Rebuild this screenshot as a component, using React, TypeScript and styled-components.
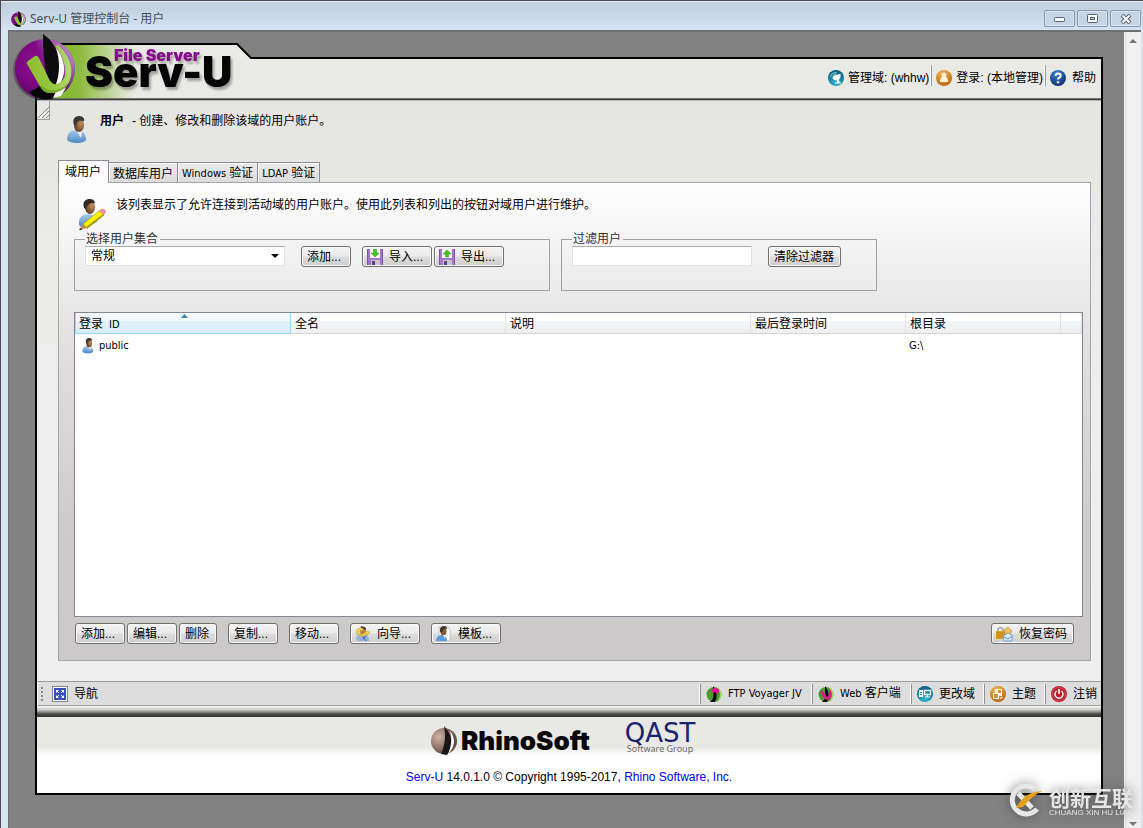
import React from "react";
import styled, { createGlobalStyle, css } from "styled-components";

const CJK = '"Noto Sans CJK SC", sans-serif';

const GlobalStyle = createGlobalStyle`
  * { box-sizing: border-box; }
  body { margin: 0; background: #828282; }
  body, button, input, select {
    font-family: "Liberation Sans", ${CJK};
    font-size: 12px;
    line-height: 16px;
    color: #000;
  }
`;

/* ---------- window ---------- */

const Window = styled.div`
  display: flex;
  flex-direction: column;
  min-height: 100vh;
  border-top: 1px solid #4a4a50;
  border-left: 1px solid #4a4a50;
  background: #d7e4f2;
`;

const TitleBar = styled.header`
  display: flex;
  align-items: center;
  height: 29px;
  padding: 6px 2px 0 10px;
  background: linear-gradient(#f4f8fc 0, #c0cddb 2px, #d5e2f1 100%);
`;

const TitleText = styled.h1`
  flex: 1;
  margin: 0 0 0 4px;
  font-family: "Noto Sans", ${CJK};
  font-size: 12px;
  font-weight: 400;
  line-height: 16px;
  color: #454f5b;
`;

const Controls = styled.div`
  display: flex;
  gap: 2px;
`;

const ControlButton = styled.button`
  display: flex;
  align-items: center;
  justify-content: center;
  width: 31px;
  height: 17px;
  padding: 0;
  border: 1px solid #8797b0;
  border-radius: 2px;
  background: #c6d4e4;
  box-shadow: inset 0 0 0 1px #dbe5f1;
`;

const Client = styled.div`
  display: flex;
  flex: 1;
  margin: 0 2px 0 7px;
  border-top: 2px solid #6e7072;
  border-left: 1px solid #6e7072;
`;

const Desk = styled.div`
  flex: 1;
  min-width: 0;
  padding: 25px 21px 32px 26px;
  background: #828282;
`;

const ScrollTrack = styled.div`
  display: flex;
  flex-direction: column;
  justify-content: space-between;
  align-items: center;
  width: 17px;
  padding: 7px 0 1px;
  background: linear-gradient(90deg, #fafafa 0, #e4e4e4 1px, #f0f0f0 4px, #f0f0f0 100%);
`;

const Panel = styled.div`
  position: relative;
  border: 2px solid #000;
  background: #e9eae5;
`;

/* ---------- header ---------- */

const Brand = styled.svg`
  position: absolute;
  top: -26px;
  left: -28px;
`;

const Wordmark = styled.g`
  font-family: Inter, sans-serif;
  font-weight: 900;
  filter: drop-shadow(2px 3px 1px rgba(0, 0, 0, 0.3));
`;

const Banner = styled.div`
  display: flex;
  justify-content: flex-end;
  height: 42px;
  padding: 6px 5px 0 0;
  background: linear-gradient(#e9eae5 39px, #74746f 39px, #74746f 40px, #3c3c3a 40px, #3c3c3a 41px, #b4b4b0 41px);
`;

const TopLink = styled.a<{ $last?: boolean }>`
  display: flex;
  align-items: center;
  gap: 4px;
  height: 21px;
  margin-left: 4px;
  padding: 4px 2px 0 0;
  color: #000;
  text-decoration: none;

  ${(p) => p.$last
    ? css`
        gap: 6px;
        padding-right: 0;
      `
    : css`
        border-right: 1px solid #9a9a9a;
        box-shadow: inset -1px 0 #fff;
      `}
`;

/* ---------- page body ---------- */

const Body = styled.main`
  padding: 0 10px 20px 0;
  background: linear-gradient(#e5e5e3 0, #e6e6e3 60px, #ebebe9 150px, #eee 300px);
`;

const PageTitle = styled.div`
  display: flex;
  align-items: flex-start;
  height: 59px;
`;

const SizeGrip = styled.svg`
  margin-right: 17px;
`;

const PageIcon = styled.div`
  margin-top: 15px;
  width: 33px;
`;

const PageText = styled.h2`
  margin: 12px 0 0;
  font-size: 12px;
  font-weight: 400;
  line-height: 16px;

  b { margin-right: 8px; }
`;

const Tabs = styled.div`
  position: relative;
  display: flex;
  align-items: flex-end;
  height: 23px;
  margin: 0 0 -1px 21px;
`;

const Tab = styled.button<{ $active?: boolean }>`
  height: 20px;
  margin-bottom: 1px;
  padding: 2px 4px 0;
  border: 1px solid #8c8c98;
  border-left-width: 0;
  border-bottom: 0;
  background: linear-gradient(#eaeaea, #dcdcdc);
  box-shadow: inset 1px 1px 0 #f8f8f8;
  white-space: nowrap;

  ${(p) => p.$active && css`
    height: 23px;
    margin-bottom: 0;
    padding: 0 7px 0 6px;
    border-left-width: 1px;
    background: #fdfdfd;
  `}
`;

const Latin = styled.span`
  font-family: "DejaVu Sans Condensed", Roboto, ${CJK};
  font-size: 11px;
`;

const TabPanel = styled.section`
  margin-left: 21px;
  padding: 14px 7px 16px 15px;
  border: 1px solid #a4a4a8;
  background: linear-gradient(#fefefe 0, #f1f0f1 80px, #e2e0e1 160px, #cdcbcc 340px, #cbc9ca 100%);
`;

const Intro = styled.div`
  display: flex;
  align-items: flex-start;
  gap: 9px;
  height: 35px;
  padding-left: 3px;

  svg { margin-top: 2px; }
  p { margin: 0; }
`;

const Groups = styled.div`
  display: flex;
  gap: 11px;
`;

const Group = styled.fieldset<{ $width: number }>`
  width: ${(p) => p.$width}px;
  height: 59px;
  margin: 0;
  padding: 0 10px;
  border: 1px solid #a0a0a0;

  legend {
    padding: 0 2px 0 1px;
    line-height: 14px;
    color: #333;
  }
`;

const Line = styled.div<{ $gap?: number }>`
  display: flex;
  gap: ${(p) => p.$gap ?? 2}px;
`;

const SelectBox = styled.div`
  position: relative;
  width: 200px;

  svg { position: absolute; top: 8px; right: 6px; pointer-events: none; }
`;

const fieldStyle = css`
  height: 20px;
  padding: 0 5px;
  border: 1px solid #e2e3ea;
  border-top-color: #abadb3;
  border-radius: 0;
  background: #fff;
`;

const Select = styled.select`
  ${fieldStyle}
  width: 100%;
  appearance: none;
`;

const Input = styled.input`
  ${fieldStyle}
  width: 180px;
`;

const PushButton = styled.button<{ $icon?: boolean; $width?: number }>`
  display: flex;
  align-items: center;
  gap: 6px;
  width: ${(p) => (p.$width ? `${p.$width}px` : "auto")};
  height: 21px;
  padding: ${(p) => (p.$icon ? "1px 6px 0 4px" : "1px 6px 0 5px")};
  border: 1px solid #707070;
  border-radius: 3px;
  background: linear-gradient(#f3f3f3 0, #ebebeb 48%, #dcdcdc 52%, #cfcfcf 100%);
  box-shadow: inset 0 0 0 1px #f8f8f8;
  white-space: nowrap;
`;

const GridFrame = styled.div`
  min-height: 305px;
  margin-top: 21px;
  border: 1px solid #828790;
  background: #fff;
`;

const Grid = styled.table`
  width: 100%;
  border-collapse: separate;
  border-spacing: 0;
  table-layout: fixed;

  td {
    height: 22px;
    padding: 1px 4px 0 3px;
    font-family: "DejaVu Sans Condensed", Roboto, ${CJK};
    font-size: 11px;
  }
`;

const HeadCell = styled.th<{ $sorted?: boolean }>`
  position: relative;
  height: 21px;
  padding: 2px 4px 0;
  border-right: 1px solid #e0e2e5;
  border-bottom: 1px solid #d5d5d5;
  background: linear-gradient(#fff 40%, #f4f5f6 42%, #eeeff1);
  font-weight: 400;
  text-align: left;

  ${(p) => p.$sorted && css`
    padding-left: 3px;
    border: 1px solid #96d9f9;
    border-top: 0;
    background: linear-gradient(#f2f9fc 40%, #e1f1f9 42%, #d8ecf6);
  `}

  svg { position: absolute; top: 1px; left: 105px; }
`;

const UserCell = styled.span`
  display: flex;
  align-items: center;
  gap: 5px;
  padding-left: 4px;
`;

const Actions = styled.div`
  display: flex;
  justify-content: space-between;
  margin: 6px 9px 0 1px;
`;

/* ---------- navigation and footer ---------- */

const NavBar = styled.nav`
  display: flex;
  align-items: center;
  height: 25px;
  padding: 0 4px 0 2px;
  border-top: 1px solid #9a9a9a;
  border-bottom: 1px solid #9a9a9a;
  border-left: 1px solid #fff;
  background: #ddd;
`;

const NavLink = styled.a<{ $width: number }>`
  display: flex;
  align-items: center;
  gap: 6px;
  width: ${(p) => p.$width}px;
  color: #000;
  text-decoration: none;
  white-space: nowrap;
`;

const NavHome = styled(NavLink)`
  flex: 1;
  margin-left: 9px;
`;

const Divider = styled.i`
  width: 2px;
  height: 20px;
  margin-right: 5px;
  border-left: 1px solid #fff;
  border-right: 1px solid #8e8e8e;
`;

const Ridge = styled.div`
  height: 11px;
  background: linear-gradient(#fff 0, #deded9 2px, #c8c8c2 4px, #8a8a86 6px, #4a4a48 8px, #333 11px);
`;

const Footer = styled.footer`
  display: flex;
  flex-direction: column;
  align-items: center;
  padding-bottom: 8px;
  background: linear-gradient(#e8e9e4 30px, #fff 39px);

  p { margin: 9px 0 0; }
  a { color: #00e; text-decoration: none; }
`;

const Logos = styled.div`
  display: flex;
  align-items: flex-start;
  gap: 12px;
  height: 43px;
  padding: 6px 0 0 6px;

  svg { overflow: visible; }
`;

const Watermark = styled.div`
  position: fixed;
  right: 10px;
  bottom: 10px;
  display: flex;
  align-items: center;
  gap: 7px;
  color: #e6e6e6;
  filter: drop-shadow(0 0 6px rgba(60, 60, 60, 0.7));
  pointer-events: none;

  strong { display: block; font: 700 21px/24px ${CJK}; white-space: nowrap; }
  small { display: block; font: 8px/8px "Liberation Sans", sans-serif; white-space: nowrap; }
`;

/* ---------- drawings ---------- */

const Defs = styled.svg`
  position: absolute;
`;

const Gradients = () => (
  <Defs width="0" height="0" aria-hidden="true">
    <defs>
      <radialGradient id="purple" cx=".4" cy=".4" r=".62">
        <stop offset="0" stopColor="#8e0f94" />
        <stop offset=".6" stopColor="#7a0880" />
        <stop offset="1" stopColor="#560a5c" />
      </radialGradient>
      <linearGradient id="gloss" x1=".4" y1=".6" x2="1" y2=".2">
        <stop offset=".3" stopColor="#d9a8e4" stopOpacity="0" />
        <stop offset="1" stopColor="#d9a8e4" stopOpacity=".9" />
      </linearGradient>
      <linearGradient id="leaf" x1="0" x2="1">
        <stop offset="0" stopColor="#8fbd31" />
        <stop offset=".6" stopColor="#97c840" />
        <stop offset="1" stopColor="#b4da78" />
      </linearGradient>
      <linearGradient id="greenFade" x1="0" x2="1">
        <stop offset="0" stopColor="#83b62d" />
        <stop offset=".35" stopColor="#8cbb3c" />
        <stop offset="1" stopColor="#e9eae5" />
      </linearGradient>
      <radialGradient id="skin" cx=".7" cy=".4" r=".7">
        <stop offset="0" stopColor="#c58f5f" />
        <stop offset="1" stopColor="#5e3a20" />
      </radialGradient>
      <linearGradient id="shirt" x1="0" y1="0" x2="0" y2="1">
        <stop offset="0" stopColor="#a9cbee" />
        <stop offset="1" stopColor="#4f88c4" />
      </linearGradient>
      <radialGradient id="teal" cx=".5" cy=".8" r=".8">
        <stop offset="0" stopColor="#35b6cf" />
        <stop offset="1" stopColor="#075a7d" />
      </radialGradient>
      <radialGradient id="amber" cx=".4" cy=".25" r=".8">
        <stop offset="0" stopColor="#f5b755" />
        <stop offset="1" stopColor="#b7620f" />
      </radialGradient>
      <radialGradient id="navy" cx=".4" cy=".2" r=".9">
        <stop offset="0" stopColor="#2c86cf" />
        <stop offset="1" stopColor="#14246c" />
      </radialGradient>
      <radialGradient id="rhino" cx=".3" cy=".35" r=".8">
        <stop offset="0" stopColor="#d3b3a6" />
        <stop offset="1" stopColor="#4d3b36" />
      </radialGradient>
    </defs>
  </Defs>
);

const Emblem = () => (
  <g>
    <circle cx="45" cy="69" r="30" fill="url(#purple)" />
    <circle cx="45" cy="69" r="30" fill="url(#gloss)" />
    <path d="M29 92 C34 90 39 87 42 84 L56 90 L54 98 C44 101 35 98 29 92Z" fill="#060606" />
    <path d="M43 34 C52 40 57 49 59 58 C60 68 59 78 56 86 L49 82 C44 68 43 52 43 34Z" fill="#0c0c0c" />
    <path d="M56 48 C62 55 65 66 64 72 C63 79 61 83 58 85 L56 84 C60 73 60 60 56 48Z" fill="#fff" />
    <path d="M56 91 L66 88 L61 96 L53 98Z" fill="#f4f4f4" />
    <path d="M27 64 Q26 62 28 61 L35 56 Q37 55 39 58 L49 79 Q52 85 57 84 C64 81 66 77 65 68 C64 59 60 52 55 46 L58 45 C64 50 68 57 70 63 C73 73 71 82 65 88 C60 92 55 93 51 93 C46 93 43 91 41 88Z" fill="url(#leaf)" />
    <path d="M41 88 C43 91 46 93 51 93 C58 93 66 89 69 81 C64 88 58 90 52 90 C47 90 44 88 41 84Z" fill="#6f9f26" opacity=".7" />
  </g>
);

const Ball = () => (
  <svg width="15" height="16" viewBox="14 34 62 66"><Emblem /></svg>
);

const BrandArt = () => (
  <Brand width="250" height="70" viewBox="9 33 250 70" role="img" aria-label="Serv-U File Server">
    <path d="M50 44 H237 L251 58 V98 H37 V60Z" fill="#e9eae5" />
    <rect x="50" y="45" width="84" height="53" fill="url(#greenFade)" />
    <path d="M50 44 H237 L251 58 H259" fill="none" stroke="#000" strokeWidth="2" />
    <circle cx="43" cy="70" r="30" fill="#000" opacity=".3" />
    <Emblem />
    <Wordmark>
      <text x="85" y="87" fontSize="42" fill="#050505">Serv-U</text>
      <text x="114" y="61" fontSize="16" fill="#860a8c">File Server</text>
    </Wordmark>
  </Brand>
);

const User = ({ width = 20, height = 28 }: { width?: number; height?: number }) => (
  <svg width={width} height={height} viewBox="0 0 20 28">
    <path d="M0 24 C0 18 3 14 9 14 C15 14 19 17 19 24 C17 28 3 28 0 24Z" fill="url(#shirt)" />
    <path d="M10 15 L15 14 L14 22Z" fill="#f4f8fc" />
    <ellipse cx="12" cy="9" rx="5" ry="7" fill="url(#skin)" />
    <path d="M7 9 C5 3 8 0 12 0 C16 0 18 3 17 5 C13 4 10 4 9 10Z" fill="#3a3634" />
  </svg>
);

const EditUser = () => (
  <svg width="30" height="32" viewBox="0 0 30 32">
    <path d="M2 26 C1 19 5 15 11 15 C16 15 19 18 20 23 L10 28 C6 29 3 28 2 26Z" fill="url(#shirt)" />
    <ellipse cx="13" cy="8" rx="5" ry="7" fill="url(#skin)" />
    <path d="M7 9 C5 2 9 0 13 0 C17 0 18 3 18 4 C14 4 10 4 9 10Z" fill="#2e2a28" />
    <path d="M6 25 L22 12 L27 16 L10 29Z" fill="#fff200" stroke="#8e8a10" strokeWidth=".6" />
    <path d="M9 28 L26 15 L27 16 L10 30Z" fill="#a6a000" />
    <path d="M22 12 L24 10 Q28 9 29 13 L27 16Z" fill="#ef8f9c" />
    <path d="M6 25 L10 29 L2 31Z" fill="#c98c4c" />
    <path d="M4 29 L5 31 L2 31Z" fill="#222" />
  </svg>
);

const Disk = ({ up }: { up?: boolean }) => (
  <svg width="16" height="16" viewBox="0 0 16 16">
    <path d="M0 0 H16 V16 H1 L0 15Z" fill="#a276c8" />
    <path d="M0 0 H1 V16 H0Z M15 0 H16 V16 H15Z" fill="#7d55a4" />
    <rect x="3" y="0" width="10" height="9" fill="#f6f2f9" />
    <rect x="4" y="11" width="9" height="5" fill="#c9c4cf" />
    <rect x="5" y="12" width="3" height="4" fill="#5d3b80" />
    <path d={up ? "M8 1 L12 5 H9.500 V8 H6.500 V5 H4Z" : "M8 8 L12 4 H9.500 V0 H6.500 V4 H4Z"} fill="#3fc51c" stroke="#2a9a14" strokeWidth=".5" />
  </svg>
);

const Wizard = () => (
  <svg width="16" height="16" viewBox="0 0 16 16">
    <path d="M1 13 C1 10 4 8 8 8 C12 8 14 10 14 15 H3Z" fill="#8eb4e0" />
    <path d="M7 9 L11 15 M11 10 L8 13" stroke="#5b5aa0" />
    <ellipse cx="8" cy="5" rx="3" ry="4" fill="#b98049" />
    <path d="M5 1 Q8 -1 11 2 V4 L8 3Z" fill="#4e4336" />
    <path d="M1 6 Q1 2 7 2 L9 4 Q4 4 4 7 L2 9Z" fill="#ecd05a" stroke="#b39424" strokeWidth=".4" />
    <path d="M4 8 Q9 9 11 5 L15 6 L13 9 L12 8 Q9 11 4 10Z" fill="#f0d23e" stroke="#a88715" strokeWidth=".4" />
  </svg>
);

const Template = () => (
  <svg width="16" height="16" viewBox="0 0 16 16">
    <path d="M3 1 H12 L14 4 V15 H3Z" fill="#fff" stroke="#b4bac2" strokeWidth=".8" />
    <path d="M0 15 C0 11 3 9 6 9 C9 9 11 11 11 15Z" fill="#5b9bdc" />
    <ellipse cx="7.500" cy="5.500" rx="3" ry="4" fill="#8a5a33" />
    <path d="M4 6 Q3 0 8 0 Q11 0 11 3 Q7 2 6 7Z" fill="#3c3530" />
    <path d="M7 9 H10 L9 13Z" fill="#e9f0f8" />
  </svg>
);

const LockUser = () => (
  <svg width="17" height="16" viewBox="0 0 17 16">
    <path d="M2 6 V3 Q4 0 7 3 V6" fill="none" stroke="#a2a2a2" strokeWidth="1.500" />
    <rect x="0" y="5" width="9" height="8" fill="#e0a11c" />
    <path d="M0 7 H9 M0 9 H9 M0 11 H9" stroke="#b9780a" strokeWidth=".7" />
    <path d="M8 4 L12 1 L16 5 L14 9 L9 8Z" fill="#ecc069" stroke="#b58a37" strokeWidth=".6" />
    <path d="M7 10 L12 7 L16 9 V15 H8Z" fill="#dcebfa" stroke="#5c93cc" strokeWidth=".8" />
    <path d="M8 11 L12 13 L16 10" fill="none" stroke="#5c93cc" />
  </svg>
);

const Round = ({ kind }: { kind: string }) => {
  const fill = { dish: "teal", domain: "teal", person: "amber", theme: "amber", help: "navy" }[kind];
  return (
    <svg width="16" height="16" viewBox="0 0 16 16">
      <circle cx="8" cy="8" r="8" fill={fill ? `url(#${fill})` : "#b91e2c"} />
      {kind === "dish" && (
        <g>
          <path d="M4.500 8 Q4.500 6 8 5 L12.500 4 Q13 8 10.500 10 Q6 11.500 4.500 8Z" fill="#fff" />
          <path d="M9 10 H11 L11.500 12.500 H13 V13.500 H7 V12.500 H9Z" fill="#fff" />
          <path d="M2.500 7 Q3 2.500 8.500 2.500 M4.500 6 Q5.500 4 8.500 3.800" fill="none" stroke="#bfe9f2" strokeWidth=".7" />
        </g>
      )}
      {kind === "person" && (
        <path d="M8 2.500 A2.300 2.300 0 0 1 9.500 6.600 Q12 8 12 12 H4 Q4 8 6.500 6.600 A2.300 2.300 0 0 1 8 2.500Z" fill="#fff3dc" />
      )}
      {kind === "help" && (
        <g>
          <path d="M5.500 6 Q5.500 3.500 8 3.500 Q10.700 3.500 10.700 5.700 Q10.700 7 9 7.800 Q8 8.400 8 9.600" fill="none" stroke="#fff" strokeWidth="2" />
          <circle cx="8" cy="12.200" r="1.200" fill="#fff" />
        </g>
      )}
      {kind === "domain" && (
        <g fill="none" stroke="#fff">
          <rect x="2.500" y="4.500" width="3" height="6" fill="#fff" />
          <path d="M3 6.500 H5 M3 8.500 H5" stroke="#17809c" />
          <rect x="7.500" y="4.500" width="6" height="4" strokeWidth="1.400" />
          <path d="M10.500 9 V11 M8 11 H13" />
        </g>
      )}
      {kind === "theme" && (
        <g>
          <rect x="5" y="3" width="7" height="7" fill="#fff3dc" />
          <rect x="8" y="4" width="3" height="3" fill="#e2912c" />
          <rect x="3.500" y="7.500" width="5" height="5" fill="#e2912c" stroke="#fff" />
          <path d="M10 12 H12 V11" fill="none" stroke="#fff" />
        </g>
      )}
      {kind === "power" && (
        <g fill="none" stroke="#fff">
          <circle cx="8" cy="8" r="6.500" stroke="#d65b65" strokeWidth=".8" />
          <path d="M5.600 5 A4 4 0 1 0 10.400 5" strokeWidth="1.400" />
          <path d="M8 3 V8" strokeWidth="1.600" />
        </g>
      )}
    </svg>
  );
};

const GreenBall = ({ web }: { web?: boolean }) => (
  <svg width="16" height="16" viewBox="0 0 16 16">
    <circle cx="8" cy="8.500" r="7.500" fill="#4c9a2e" />
    <path d="M12 2 Q17 8 13 14" fill="none" stroke="#a5dc66" strokeWidth="1.500" />
    <path d="M7 0 Q13 7 9 16 H4 Q9 12 7 6Z" fill="#0a0a0a" />
    {web ? (
      <path d="M2 6 L5 5 L9 11 Q11 11 11 6 L12 3 Q15 9 12 13 Q8 15 6 12Z" fill="#e6178f" />
    ) : (
      <path d="M5 4 L8 2 L13 3 L13 6 L11 8 L9 6 L7 7Z" fill="#ec1296" />
    )}
  </svg>
);

const NavIcon = () => (
  <svg width="16" height="16" viewBox="0 0 16 16">
    <rect x=".5" y=".5" width="15" height="15" fill="#fff" stroke="#7d8794" />
    <rect x="2" y="2" width="12" height="12" fill="#3450bd" />
    <path d="M4 4 L7 7 M12 4 L9 7 M4 12 L7 9 M12 12 L9 9" stroke="#fff" />
    <path d="M4 4 H7 L4 7Z M12 4 V7 L9 4Z M12 12 H9 L12 9Z M4 12 V9 L7 12Z" fill="#fff" />
  </svg>
);

const NavGrip = () => (
  <svg width="3" height="16" viewBox="0 0 3 16">
    <path d="M1 1 H3 V3 H1Z M1 5 H3 V7 H1Z M1 9 H3 V11 H1Z M1 13 H3 V15 H1Z" fill="#8a8a8a" />
  </svg>
);

const RhinoSoft = () => (
  <svg width="164" height="36" viewBox="0 0 164 36" role="img" aria-label="RhinoSoft">
    <circle cx="14" cy="18" r="13" fill="url(#rhino)" />
    <path d="M14 3 C22 11 24 22 17 32 L11 31 C15 22 16 12 14 3Z" fill="#1b1715" />
    <path d="M20 8 C26 15 25 25 18 31 C22 22 22 15 20 8Z" fill="#fff" />
    <text x="31" y="27" fontFamily="Inter, sans-serif" fontWeight="900" fontSize="26" fill="#080808">RhinoSoft</text>
  </svg>
);

const Qast = () => (
  <svg width="108" height="32" viewBox="0 0 108 32" role="img" aria-label="QAST Software Group">
    <text x="54" y="19" textAnchor="middle" fontFamily="DejaVu Sans, sans-serif" fontSize="26" fill="#1b2272">QAST</text>
    <text x="54" y="29" textAnchor="middle" fontFamily="Noto Sans, sans-serif" fontSize="9" fill="#6a6a6a">Software Group</text>
  </svg>
);

/* ---------- data ---------- */

const columns = [
  { label: "全名", width: 215 },
  { label: "说明", width: 245 },
  { label: "最后登录时间", width: 155 },
  { label: "根目录", width: 155 },
];

export default function App() {
  return (
    <Window>
      <GlobalStyle />
      <Gradients />
      <TitleBar>
        <Ball />
        <TitleText>Serv-U 管理控制台 - 用户</TitleText>
        <Controls>
          <ControlButton aria-label="最小化">
            <svg width="12" height="6" viewBox="0 0 12 6"><rect x=".5" y="1.500" width="10" height="4" rx="1" fill="#fff" stroke="#55606f" /></svg>
          </ControlButton>
          <ControlButton aria-label="最大化">
            <svg width="11" height="9" viewBox="0 0 11 9"><rect x=".5" y=".5" width="10" height="8" rx="1" fill="#fff" stroke="#55606f" /><rect x="3.500" y="3.500" width="4" height="2" fill="#c6d4e4" stroke="#55606f" /></svg>
          </ControlButton>
          <ControlButton aria-label="关闭">
            <svg width="12" height="10" viewBox="0 0 12 10"><path d="M2 1 L10 9 M10 1 L2 9" stroke="#55606f" strokeWidth="4" /><path d="M2.500 1.500 L9.500 8.500 M9.500 1.500 L2.500 8.500" stroke="#fff" strokeWidth="2" /></svg>
          </ControlButton>
        </Controls>
      </TitleBar>

      <Client>
        <Desk>
          <Panel>
            <Banner>
              <TopLink href="#domain"><Round kind="dish" /><span>管理域: (whhw)</span></TopLink>
              <TopLink href="#login"><Round kind="person" /><span>登录: (本地管理)</span></TopLink>
              <TopLink href="#help" $last><Round kind="help" /><span>帮助</span></TopLink>
            </Banner>
            <BrandArt />

            <Body>
              <PageTitle>
                <SizeGrip width="13" height="19" viewBox="0 0 13 19">
                  <path d="M12.500 0 V18.500 H0" fill="none" stroke="#a0a09c" />
                  <path d="M1 17 L12 6 M5 17 L12 10 M9 17 L12 14" stroke="#8a8a86" />
                  <path d="M2 18 L12 8 M6 18 L12 12" stroke="#fff" />
                </SizeGrip>
                <PageIcon><User /></PageIcon>
                <PageText><b>用户</b>- 创建、修改和删除该域的用户账户。</PageText>
              </PageTitle>

              <Tabs role="tablist">
                <Tab role="tab" aria-selected $active>域用户</Tab>
                <Tab role="tab">数据库用户</Tab>
                <Tab role="tab"><Latin>Windows </Latin>验证</Tab>
                <Tab role="tab"><Latin>LDAP </Latin>验证</Tab>
              </Tabs>

              <TabPanel role="tabpanel">
                <Intro>
                  <EditUser />
                  <p>该列表显示了允许连接到活动域的用户账户。使用此列表和列出的按钮对域用户进行维护。</p>
                </Intro>

                <Groups>
                  <Group $width={476}>
                    <legend>选择用户集合</legend>
                    <Line $gap={16}>
                      <SelectBox>
                        <Select aria-label="选择用户集合" defaultValue="常规"><option>常规</option></Select>
                        <svg width="8" height="4" viewBox="0 0 8 4"><path d="M0 0 H8 L4 4Z" fill="#000" /></svg>
                      </SelectBox>
                      <Line $gap={11}>
                        <PushButton $width={50}>添加...</PushButton>
                        <Line>
                          <PushButton $icon $width={70}><Disk />导入...</PushButton>
                          <PushButton $icon $width={70}><Disk up />导出...</PushButton>
                        </Line>
                      </Line>
                    </Line>
                  </Group>
                  <Group $width={316}>
                    <legend>过滤用户</legend>
                    <Line $gap={16}>
                      <Input aria-label="过滤用户" />
                      <PushButton>清除过滤器</PushButton>
                    </Line>
                  </Group>
                </Groups>

                <GridFrame>
                  <Grid>
                    <colgroup>
                      <col width="216" />
                      {columns.map((c) => <col key={c.label} width={c.width} />)}
                      <col />
                    </colgroup>
                    <thead>
                      <tr>
                        <HeadCell $sorted>
                          登录&ensp;<Latin>ID</Latin>
                          <svg width="7" height="4" viewBox="0 0 7 4"><path d="M0 4 L3.500 0 L7 4Z" fill="#3f83a8" /></svg>
                        </HeadCell>
                        {columns.map((c) => <HeadCell key={c.label}>{c.label}</HeadCell>)}
                        <HeadCell aria-hidden="true" />
                      </tr>
                    </thead>
                    <tbody>
                      <tr>
                        <td><UserCell><User width={12} height={16} />public</UserCell></td>
                        <td /><td /><td />
                        <td>G:\</td>
                        <td />
                      </tr>
                    </tbody>
                  </Grid>
                </GridFrame>

                <Actions>
                  <Line $gap={11}>
                    <Line>
                      <PushButton $width={50}>添加...</PushButton>
                      <PushButton $width={50}>编辑...</PushButton>
                      <PushButton $width={38}>删除</PushButton>
                    </Line>
                    <PushButton $width={50}>复制...</PushButton>
                    <PushButton $width={50}>移动...</PushButton>
                    <PushButton $icon $width={70}><Wizard />向导...</PushButton>
                    <PushButton $icon $width={70}><Template />模板...</PushButton>
                  </Line>
                  <PushButton $icon><LockUser />恢复密码</PushButton>
                </Actions>
              </TabPanel>
            </Body>

            <NavBar>
              <NavGrip />
              <NavHome href="#nav" $width={50}><NavIcon />导航</NavHome>
              <Divider />
              <NavLink href="#ftp" $width={105}><GreenBall /><Latin>FTP Voyager JV</Latin></NavLink>
              <Divider />
              <NavLink href="#web" $width={92}><GreenBall web /><span><Latin>Web </Latin>客户端</span></NavLink>
              <Divider />
              <NavLink href="#change" $width={66}><Round kind="domain" />更改域</NavLink>
              <Divider />
              <NavLink href="#theme" $width={54}><Round kind="theme" />主题</NavLink>
              <Divider />
              <NavLink href="#logout" $width={46}><Round kind="power" />注销</NavLink>
            </NavBar>
            <Ridge />

            <Footer>
              <Logos><RhinoSoft /><Qast /></Logos>
              <p>
                <a href="#serv-u">Serv-U</a> 14.0.1.0 © Copyright 1995-2017, <a href="#rhino">Rhino Software, Inc.</a>
              </p>
            </Footer>
          </Panel>
        </Desk>
        <ScrollTrack>
          <svg width="8" height="5" viewBox="0 0 8 5"><path d="M0 4 L4 0 L8 4Z" fill="#777" /></svg>
          <svg width="8" height="5" viewBox="0 0 8 5"><path d="M0 0 H8 L4 4Z" fill="#777" /></svg>
        </ScrollTrack>
      </Client>

      <Watermark>
        <svg width="34" height="34" viewBox="0 0 34 34">
          <path d="M27 5 A14 14 0 1 0 29 25" fill="none" stroke="#e6e6e6" strokeWidth="5" />
          <path d="M10 9 L24 24" stroke="#e6e6e6" strokeWidth="5" />
          <path d="M8 24 Q16 8 34 7 Q24 12 15 23Z" fill="#e5a11b" />
        </svg>
        <span>
          <strong>创新互联</strong>
          <small>CHUANG XIN HU LIAN</small>
        </span>
      </Watermark>
    </Window>
  );
}
